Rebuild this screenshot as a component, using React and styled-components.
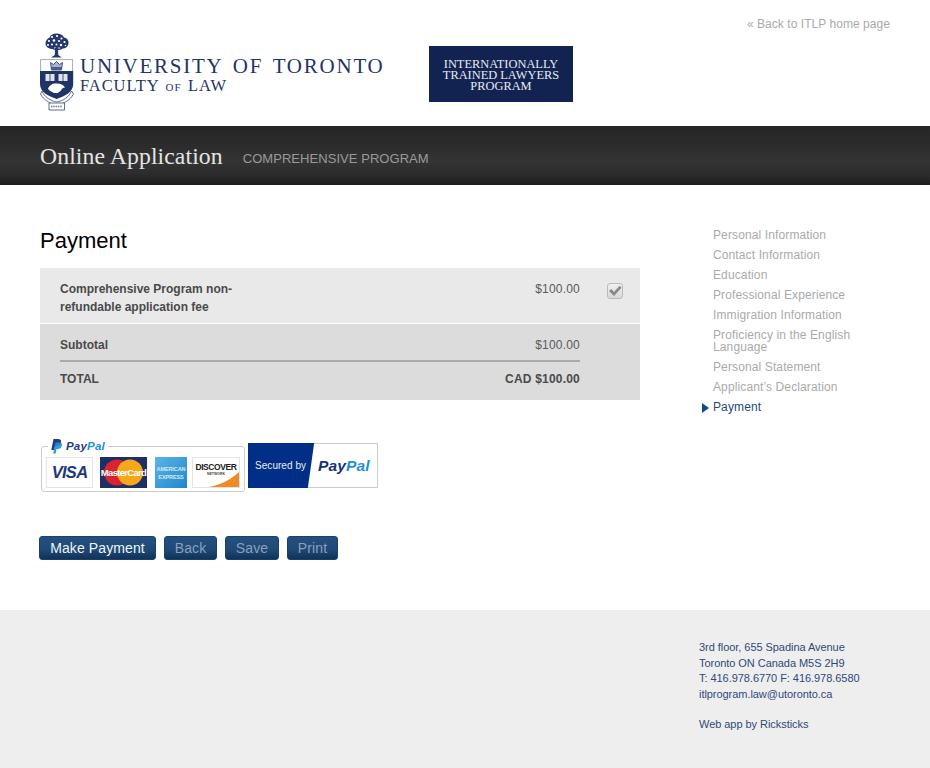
import React from "react";
import styled, { createGlobalStyle } from "styled-components";

const Global = createGlobalStyle`
  html, body { margin: 0; padding: 0; background: #fff; }
  body { font-family: "Liberation Sans", Arial, sans-serif; }
  * { box-sizing: border-box; }
`;
const Page = styled.div`width: 930px; height: 768px; overflow: hidden; display: flex; flex-direction: column;`;

/* header */
const Header = styled.header`height: 126px; padding: 33px 40px 0 40px; display: flex; align-items: flex-start;`;
const UofT = styled.div`display: flex; width: 389px; gap: 4px; flex: none;`;
const Wordmark = styled.div`padding-top: 21px; display: flex; flex-direction: column; color: #1f3565; font-family: "Liberation Serif", serif;`;
const WordTop = styled.div`font-size: 21px; line-height: 24px; letter-spacing: 1.75px; word-spacing: 3px; white-space: nowrap;`;
const WordSub = styled.div`font-size: 16.5px; line-height: 16px; letter-spacing: .9px; white-space: nowrap;`;
const SmallOf = styled.span`font-size: 11px; margin: 0 1.5px;`;
const Itlp = styled.div`
  margin-top: 13px; width: 144px; height: 56px; background: #122352; color: #e8ebf2; flex: none;
  font-family: "Liberation Serif", serif; font-size: 12.4px; line-height: 11px; text-align: center; padding-top: 13px;
`;
const BackLink = styled.a`margin: -16px 0 0 auto; font-size: 12px; line-height: 14px; color: #aaa; letter-spacing: .05px; white-space: nowrap;`;

/* dark bar */
const Bar = styled.div`
  height: 59px; padding: 0 40px; display: flex; align-items: flex-start; gap: 20px;
  background:
    repeating-linear-gradient(0deg, rgba(255,255,255,.012) 0 1px, rgba(0,0,0,.03) 1px 2px),
    linear-gradient(#252525 0%, #2a2a2a 30%, #343434 60%, #2b2b2b 82%, #1d1d1d 100%);
`;
const BarTitle = styled.div`font-family: "Liberation Serif", serif; font-size: 23.7px; line-height: 60px; color: #e4e4e4; letter-spacing: .1px;`;
const BarSub = styled.div`font-size: 13px; line-height: 59px; padding-top: 3px; color: #9a9a9a; letter-spacing: .05px;`;

/* main */
const Main = styled.main`flex: 1; display: flex; padding: 40px 0 0 39px;`;
const Column = styled.section`width: 601px; flex: none; display: flex; flex-direction: column; align-items: flex-start;`;
const Title = styled.h1`margin: 0 0 0 1px; font-weight: 400; font-size: 22px; line-height: 32px; color: #000; height: 43px;`;
const Table = styled.div`width: 600px; margin-left: 1px; color: #4a4a4a; font-size: 12px;`;
const ItemRow = styled.div`height: 55px; background: #e9e9e9; display: flex; padding: 12px 17px 0 20px; margin-bottom: 1px;`;
const ItemLabel = styled.div`width: 200px; font-weight: 700; line-height: 18px;`;
const Price = styled.div`margin-left: auto; line-height: 18px; color: ${p => p.$bold ? "#4a4a4a" : "#5a5a5a"}; font-weight: ${p => p.$bold ? 700 : 400}; letter-spacing: .2px;`;
const Check = styled.div`
  margin: 3px 0 0 27px; width: 16px; height: 16px; border: 1px solid #bbb; border-radius: 3px;
  background: linear-gradient(#f0f0f0, #d8d8d8); display: flex; align-items: center; justify-content: center;
`;
const Totals = styled.div`height: 76px; background: #dcdcdc; padding: 12px 60px 0 20px;`;
const TotalRow = styled.div`
  display: flex; height: ${p => p.$h}px; font-weight: 700; line-height: 18px;
  border-bottom: ${p => p.$rule ? "2px solid #aaa" : "0"}; padding-top: ${p => p.$rule ? 0 : 8}px;
`;
const Badges = styled.div`margin: 38px 0 0 2px; display: flex; align-items: flex-start; gap: 3px; height: 98px;`;
const CardFrame = styled.div`
  position: relative; margin-top: 8px; width: 204px; height: 46px; border: 1px solid #ccc; border-radius: 3px;
  padding: 10px 4px 3px 4px; display: flex; align-items: stretch;
`;
const Legend = styled.div`
  position: absolute; left: 6px; top: -9px; height: 16px; padding: 0 3px; background: #fff; display: flex; align-items: center; gap: 4px;
  font-style: italic; font-weight: 700; font-size: 11.5px; color: #1f3a8a; letter-spacing: .2px;
`;
const Pal = styled.span`color: #1f8fd6;`;
const CardsRow = styled.div`display: flex; width: 100%;`;
const Card = styled.div`
  position: relative; height: 31px; width: ${p => p.$w}px; margin-left: ${p => p.$ml}px; overflow: hidden; flex: none;
  background: ${p => p.$bg}; border: ${p => p.$line ? "1px solid #e4e4e4" : "0"}; color: ${p => p.$fg || "#fff"};
  display: flex; align-items: center; justify-content: center; white-space: nowrap;
`;
const VisaText = styled.span`font: italic 700 16.5px "Liberation Sans", sans-serif; color: #1c3a78; letter-spacing: -.7px;`;
const McText = styled.span`position: relative; font: 700 9.5px "Liberation Sans", sans-serif; letter-spacing: -.7px; color: #fff;`;
const Discs = styled.svg`position: absolute; inset: 0;`;
const AmexText = styled.span`font: 700 5.5px/8px "Liberation Sans", sans-serif; text-align: center; color: #d5ecfa; letter-spacing: -.1px;`;
const DiscBox = styled.span`position: relative; display: flex; flex-direction: column; align-items: center; margin-top: -7px;`;
const DiscText = styled.span`font: 700 8.5px/10px "Liberation Sans", sans-serif; color: #222; letter-spacing: -.4px;`;
const DiscSub = styled.span`font: 700 3.5px/4px "Liberation Sans", sans-serif; color: #444;`;
const Secured = styled.div`
  position: relative; overflow: hidden; width: 130px; height: 45px; margin-top: 5px; background: #fff;
  box-shadow: inset 0 0 0 1px #ccc; display: flex; align-items: center;
  &::before { content: ""; position: absolute; left: -10px; top: 0; bottom: 0; width: 73px; background: #012f87; transform: skewX(-8deg); }
`;
const SecText = styled.span`position: relative; margin-left: 7px; width: 63px; color: #e8edf6; font-size: 10px; font-weight: 400; letter-spacing: .05px; white-space: nowrap;`;
const SecPay = styled.span`position: relative; font-style: italic; font-weight: 700; font-size: 15.5px; color: #14317e; letter-spacing: .15px;`;
const Buttons = styled.div`display: flex; gap: 8px;`;
const Button = styled.button`
  height: 24px; width: ${p => p.$w}px; padding: 0; border: 1px solid #1c4068; border-radius: 3px; font: 14px "Liberation Sans", sans-serif;
  background: linear-gradient(#24507f 0%, #1f4a78 55%, #0f3358 100%);
  color: ${p => p.$on ? "#f2f5f9" : "#8a9fb9"}; letter-spacing: .1px;
`;

/* side nav */
const Side = styled.nav`margin: 0 0 0 22px; display: flex; flex-direction: column;`;
const NavItem = styled.div`
  position: relative; width: 160px; margin-left: 51px; padding: 4px 0; font-size: 12px; line-height: 12px; letter-spacing: .12px;
  color: ${p => p.$on ? "#1d4a7c" : "#aaa"};
`;
const Arrow = styled.span`
  position: absolute; left: -11px; top: 6px; border-left: 7px solid #0f4d8a; border-top: 5px solid transparent; border-bottom: 5px solid transparent;
`;

/* footer */
const Footer = styled.footer`height: 158px; background: #eee; padding: 30px 0 0 699px; color: #2f4a7a; font-size: 11px; line-height: 15.5px; letter-spacing: -.05px;`;
const Line = styled.div`white-space: nowrap; margin-top: ${p => p.$mt || 0}px;`;

const Crest = () => (
  <svg width="36" height="78" viewBox="0 0 36 78" style={{ flex: "none", display: "block" }} aria-hidden="true">
    <path d="M16 .5c4 0 7 1.500 8 4 3 .5 5 3 4.500 6-.3 3-3 5-6 5-1.500 2-8 2-10 .5-4 0-7-2.500-7-5.500S7.500 5.500 9.500 4.500C11 1.500 13 .5 16 .5z" fill="#24386b" />
    <g fill="#fff" stroke="none">
      <circle cx="12" cy="4" r="1.100" /><circle cx="17" cy="3" r="1.100" /><circle cx="21.500" cy="5.500" r="1.100" />
      <circle cx="9" cy="8" r="1.100" /><circle cx="14" cy="7.500" r="1.300" /><circle cx="19" cy="8" r="1.100" /><circle cx="24.500" cy="9" r="1.100" />
      <circle cx="8" cy="12" r="1" /><circle cx="12" cy="11.500" r="1.100" /><circle cx="16.500" cy="11.500" r="1" /><circle cx="21" cy="12" r="1.200" /><circle cx="25.500" cy="12.500" r=".8" />
      <circle cx="15" cy="15" r=".8" /><circle cx="19" cy="15" r=".8" />
    </g>
    <path d="M15 15h3l.3 7 3.500 2.500H11l3.800-2.500z" fill="#24386b" />
    <path d="M.6 26.600h32v12H.6z" fill="#fff" stroke="#8b93a8" strokeWidth=".8" />
    <path d="M10.500 29.500l3 2 3-3 3 3 3-2-1 7.500h-10z" fill="#aab2c8" stroke="#3a4a78" strokeWidth=".9" />
    <path d="M11 34h11v3H11z" fill="#4e5d86" />
    <path d="M0 38h33.200v13c0 8-8 12-16.600 15C8 63 0 59 0 51z" fill="#1f3565" />
    <path d="M5.500 41h9v7h-9zM18.500 41h9v7h-9z" fill="#dfe3ec" />
    <path d="M10 41v7M23 41v7" stroke="#1f3565" strokeWidth=".8" />
    <path d="M8 56c1-4 5-6 9-5.500 4 0 7 2 8 4-2 0-3 1-4 3-2 2-4 3-6 2.500-2 0-5-2-7-4z" fill="#fff" />
    <path d="M2 58c2 6 9 10 14.600 11C23 68 29 64 31.500 58l2 3c-3 6-10 10-17 11-6-1-13-5-16-11z" fill="#fff" stroke="#3a4a78" strokeWidth=".8" />
    <path d="M9 70h15.500v7H9z" fill="#fff" stroke="#3a4a78" strokeWidth=".8" />
    <path d="M11 73.500h11.500" stroke="#6d7a9c" strokeWidth="1.600" strokeDasharray="1.500 .8" />
  </svg>
);
const PMark = () => (
  <svg width="11" height="15" viewBox="0 0 11 15" aria-hidden="true">
    <path d="M2.500 0H7c2.500 0 3.500 1.500 3 3.500C9.500 6 8 7 5.500 7H4l-.8 4H.3z" fill="#1f3a8a" />
    <path d="M4.500 3.500H8.500c2 0 3 1 2.300 3.200C10.200 9 8.800 10 6.800 10H5.500l-.8 4.500H2.200z" fill="#1f8fd6" opacity=".9" />
  </svg>
);

const nav = ["Personal Information", "Contact Information", "Education", "Professional Experience", "Immigration Information", "Proficiency in the English Language", "Personal Statement", "Applicant’s Declaration"];

export default function App() {
  return (
    <Page>
      <Global />
      <Header>
        <UofT>
          <Crest />
          <Wordmark>
            <WordTop>UNIVERSITY OF TORONTO</WordTop>
            <WordSub>FACULTY <SmallOf>OF</SmallOf> LAW</WordSub>
          </Wordmark>
        </UofT>
        <Itlp>INTERNATIONALLY<br />TRAINED LAWYERS<br />PROGRAM</Itlp>
        <BackLink>« Back to ITLP home page</BackLink>
      </Header>
      <Bar>
        <BarTitle>Online Application</BarTitle>
        <BarSub>COMPREHENSIVE PROGRAM</BarSub>
      </Bar>
      <Main>
        <Column>
          <Title>Payment</Title>
          <Table>
            <ItemRow>
              <ItemLabel>Comprehensive Program non-refundable application fee</ItemLabel>
              <Price>$100.00</Price>
              <Check>
                <svg width="14" height="12" viewBox="0 0 14 12" aria-hidden="true"><path d="M1 6l2.300-2 2.700 3L11.500.8 13.500 2.800 6 11z" fill="#888" /></svg>
              </Check>
            </ItemRow>
            <Totals>
              <TotalRow $h={26} $rule>Subtotal<Price>$100.00</Price></TotalRow>
              <TotalRow $h={30}>TOTAL<Price $bold>CAD $100.00</Price></TotalRow>
            </Totals>
          </Table>
          <Badges>
            <CardFrame>
              <Legend><PMark /><span>Pay<Pal>Pal</Pal></span></Legend>
              <CardsRow>
                <Card $w={47} $ml={0} $bg="#fff" $line><VisaText>VISA</VisaText></Card>
                <Card $w={47} $ml={7} $bg="#1c2f66">
                  <Discs width="47" height="31" viewBox="0 0 47 31" aria-hidden="true">
                    <circle cx="17" cy="15.500" r="13" fill="#d9232e" />
                    <circle cx="30" cy="15.500" r="13" fill="#f6a81c" />
                  </Discs>
                  <McText>MasterCard</McText>
                </Card>
                <Card $w={32} $ml={8} $bg="linear-gradient(135deg,#5db4e8,#1f86cb)"><AmexText>AMERICAN<br />EXPRESS</AmexText></Card>
                <Card $w={48} $ml={5} $bg="#fff" $line>
                  <Discs width="48" height="31" viewBox="0 0 48 31" aria-hidden="true">
                    <path d="M10 30C26 28 38 22 48 12v18z" fill="#f08a24" />
                  </Discs>
                  <DiscBox><DiscText>DISCOVER</DiscText><DiscSub>NETWORK</DiscSub></DiscBox>
                </Card>
              </CardsRow>
            </CardFrame>
            <Secured>
              <SecText>Secured by</SecText>
              <SecPay>Pay<Pal>Pal</Pal></SecPay>
            </Secured>
          </Badges>
          <Buttons>
            <Button $on $w={117}>Make Payment</Button>
            <Button $w={53}>Back</Button>
            <Button $w={54}>Save</Button>
            <Button $w={51}>Print</Button>
          </Buttons>
        </Column>
        <Side>
          {nav.map(n => <NavItem key={n}>{n}</NavItem>)}
          <NavItem $on><Arrow />Payment</NavItem>
        </Side>
      </Main>
      <Footer>
        <Line>3rd floor, 655 Spadina Avenue</Line>
        <Line>Toronto ON Canada M5S 2H9</Line>
        <Line>T: 416.978.6770 F: 416.978.6580</Line>
        <Line>itlprogram.law@utoronto.ca</Line>
        <Line $mt={15}>Web app by Ricksticks</Line>
      </Footer>
    </Page>
  );
}
